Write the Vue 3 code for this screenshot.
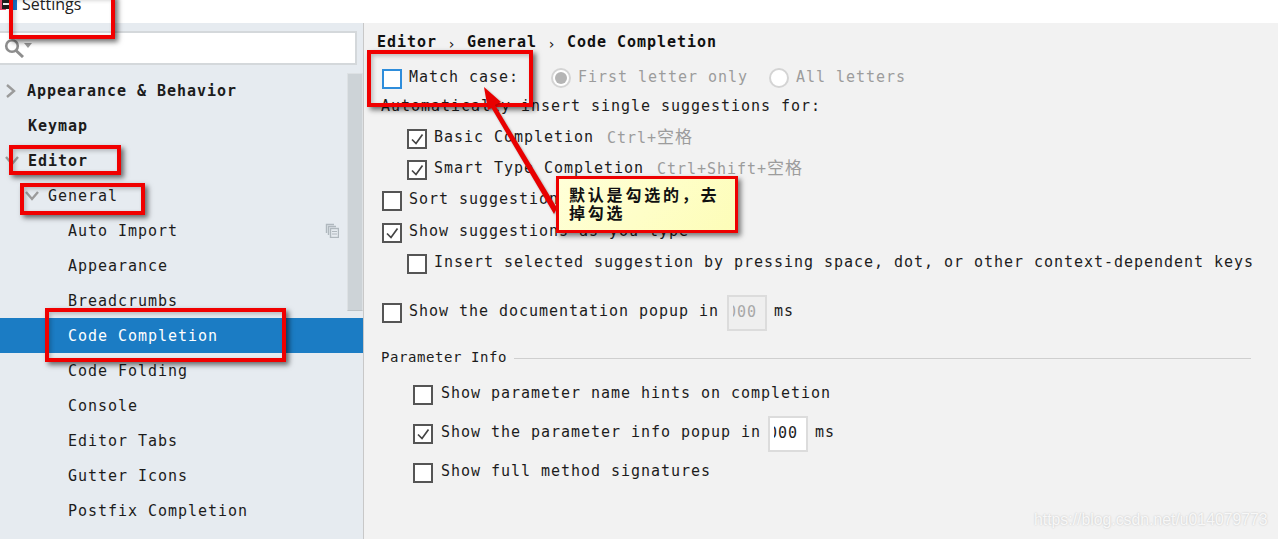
<script setup>
const tree = [
  { label: 'Appearance & Behavior', cls: 'top first-row', arrow: 'right' },
  { label: 'Keymap', cls: 'top plain' },
  { label: 'Editor', cls: 'top', arrow: 'down' },
  { label: 'General', cls: 'group', arrow: 'down' },
  { label: 'Auto Import', cls: 'leaf', copy: true },
  { label: 'Appearance', cls: 'leaf' },
  { label: 'Breadcrumbs', cls: 'leaf' },
  { label: 'Code Completion', cls: 'leaf selected' },
  { label: 'Code Folding', cls: 'leaf' },
  { label: 'Console', cls: 'leaf' },
  { label: 'Editor Tabs', cls: 'leaf' },
  { label: 'Gutter Icons', cls: 'leaf' },
  { label: 'Postfix Completion', cls: 'leaf' }
]
</script>

<template>
  <div class="app">
    <header class="titlebar">
      <svg class="app-icon" width="18" height="14" viewBox="0 0 18 14">
        <rect x="0" y="0" width="6" height="12" fill="#e0486a" />
        <rect x="2" y="0" width="9" height="11" fill="#1c1c1c" />
        <rect x="3" y="5" width="7" height="2" fill="#f0f0f0" />
        <rect x="11" y="0" width="6" height="12" fill="#1877d0" />
      </svg>
      <span class="title">Settings</span>
    </header>

    <div class="body">
      <aside class="sidebar">
        <div class="search">
          <svg width="30" height="20" viewBox="0 0 30 20">
            <circle cx="9" cy="8" r="5.8" fill="none" stroke="#8d8d8d" stroke-width="2.6" />
            <path d="M13 12.5 L20 19" stroke="#8d8d8d" stroke-width="3" fill="none" />
            <path d="M21 5 H29 L25 10 Z" fill="#9a9a9a" />
          </svg>
        </div>
        <ul class="tree">
          <li v-for="item in tree" :key="item.label" class="row" :class="item.cls">
            <svg v-if="item.arrow === 'right'" class="chev" width="12" height="16" viewBox="0 0 12 16">
              <path d="M2 2 L9 8 L2 14" fill="none" stroke="#9b9b9b" stroke-width="2.4" />
            </svg>
            <svg v-if="item.arrow === 'down'" class="chev" width="14" height="12" viewBox="0 0 14 12">
              <path d="M1 2 L7 9 L13 2" fill="none" stroke="#9b9b9b" stroke-width="2.4" />
            </svg>
            <span>{{ item.label }}</span>
            <svg v-if="item.copy" class="copy" width="14" height="15" viewBox="0 0 14 15">
              <path d="M9 1.5 H1.5 V10" fill="none" stroke="#b0b8be" stroke-width="1.4" />
              <path d="M11 3.5 H3.5 V12" fill="none" stroke="#b0b8be" stroke-width="1.4" />
              <rect x="5.5" y="5.5" width="8" height="9" fill="#e6ebf0" stroke="#b0b8be" stroke-width="1.4" />
              <path d="M7 8.5 H12 M7 11 H12" stroke="#b0b8be" stroke-width="1.2" />
            </svg>
          </li>
        </ul>
        <div class="scrollbar"></div>
      </aside>

      <main class="main">
        <nav class="crumbs">
          <span>Editor</span><i class="sep">›</i><span>General</span><i class="sep">›</i><span>Code Completion</span>
        </nav>

        <div class="opt opt-first">
          <b class="cb focus"></b><span class="t">Match case:</span>
          <b class="radio on first"></b><span class="t dim">First letter only</span>
          <b class="radio second"></b><span class="t dim">All letters</span>
        </div>
        <div class="opt tight auto"><span class="t">Automatically insert single suggestions for:</span></div>
        <div class="opt sub">
          <b class="cb"><svg viewBox="0 0 16 16"><path d="M3 8.5 L7 12.5 L13.5 3.5" /></svg></b>
          <span class="t">Basic Completion</span><span class="t dim keys">Ctrl+<em>空格</em></span>
        </div>
        <div class="opt sub">
          <b class="cb"><svg viewBox="0 0 16 16"><path d="M3 8.5 L7 12.5 L13.5 3.5" /></svg></b>
          <span class="t">Smart Type Completion</span><span class="t dim keys">Ctrl+Shift+<em>空格</em></span>
        </div>
        <div class="opt">
          <b class="cb"></b><span class="t">Sort suggestions alphabetically</span>
        </div>
        <div class="opt wide">
          <b class="cb"><svg viewBox="0 0 16 16"><path d="M3 8.5 L7 12.5 L13.5 3.5" /></svg></b>
          <span class="t">Show suggestions as you type</span>
        </div>
        <div class="opt sub">
          <b class="cb"></b><span class="t">Insert selected suggestion by pressing space, dot, or other context-dependent keys</span>
        </div>
        <div class="opt doc">
          <b class="cb"></b><span class="t">Show the documentation popup in</span>
          <span class="num off"><span class="clip">1000</span></span><span class="t">ms</span>
        </div>

        <div class="section"><span>Parameter Info</span><hr /></div>

        <div class="opt param p1">
          <b class="cb"></b><span class="t">Show parameter name hints on completion</span>
        </div>
        <div class="opt param p2">
          <b class="cb"><svg viewBox="0 0 16 16"><path d="M3 8.5 L7 12.5 L13.5 3.5" /></svg></b>
          <span class="t">Show the parameter info popup in</span>
          <span class="num"><span class="clip">1000</span></span><span class="t">ms</span>
        </div>
        <div class="opt param p2">
          <b class="cb"></b><span class="t">Show full method signatures</span>
        </div>
      </main>
    </div>

    <div class="mark m-title"></div>
    <div class="mark m-editor"></div>
    <div class="mark m-general"></div>
    <div class="mark m-code"></div>
    <div class="mark m-match"></div>
    <svg class="arrow" width="1278" height="539" viewBox="0 0 1278 539">
      <polygon points="484,87 501,102 495,105 557,208 554,214 491.5,108 488,110" fill="#e80000" />
    </svg>
    <div class="note">默认是勾选的，去掉勾选</div>
    <div class="watermark">https://blog.csdn.net/u014079773</div>
  </div>
</template>

<style>
html, body { margin: 0; background: #fff; }
</style>

<style scoped>
.app {
  position: relative;
  width: 1278px;
  height: 539px;
  overflow: hidden;
  display: flex;
  flex-direction: column;
  font-family: "DejaVu Sans Mono", "Noto Sans CJK SC", monospace;
  font-size: 15px;
  letter-spacing: 0.97px;
  color: #1c1c1c;
}
.titlebar {
  height: 23px;
  flex: none;
  background: #fff;
  display: flex;
  overflow: hidden;
}
.app-icon { margin-top: -2px; flex: none; }
.title {
  margin: -6px 0 0 4px;
  font-family: "Open Sans", sans-serif;
  font-size: 16px;
  letter-spacing: 0;
  line-height: 20px;
  color: #222;
}
.body { flex: 1; display: flex; min-height: 0; }
.sidebar {
  position: relative;
  width: 363px;
  flex: none;
  background: #e6ebf0;
  border-right: 1px solid #c8c8c8;
  padding-top: 8px;
}
.search {
  width: 352px;
  height: 30px;
  background: #fff;
  border: 2px solid #d4d8db;
  border-left: 0;
  display: flex;
  align-items: center;
  padding-left: 3px;
}
.tree { list-style: none; margin: 8px 0 0; padding: 0; }
.row {
  height: 35px;
  display: flex;
  align-items: center;
  box-sizing: border-box;
  padding-right: 24px;
}
.top { font-weight: 700; padding-left: 5px; }
.top .chev { margin-right: 9px; }
.first-row .chev { margin-right: 10px; }
.top.plain { padding-left: 28px; }
.group { padding-left: 25px; }
.group .chev { margin-right: 9px; }
.leaf { padding-left: 68px; }
.selected { background: #1b7cc4; color: #fff; }
.copy { margin-left: auto; }
.scrollbar {
  position: absolute;
  left: 347px;
  top: 50px;
  width: 14px;
  height: 236px;
  background: #cdd3d7;
  border: 1px solid #dde1e4;
  border-bottom-color: #bcc2c6;
}
.main {
  flex: 1;
  background: #f2f2f2;
  padding: 9px 0 0 13px;
  min-width: 0;
}
.crumbs {
  height: 20px;
  display: flex;
  align-items: center;
  font-weight: 700;
  color: #111;
}
.sep {
  font-style: normal;
  font-weight: 400;
  font-size: 14px;
  width: 30px;
  text-align: center;
  padding-top: 4px;
  box-sizing: border-box;
}
.opt {
  height: 24px;
  display: flex;
  align-items: center;
  margin-left: 5px;
  margin-top: 7px;
  white-space: nowrap;
}
.opt-first { margin-top: 15px; }
.tight { margin-top: 5px; margin-left: 4px; }
.sub { margin-left: 30px; }
.wide { margin-top: 8px; }
.doc { margin-top: 25px; }
.param { margin-left: 36px; }
.param .cb { margin-right: 8px; }
.param .num { margin-left: 7px; }
.p1 { margin-top: 14px; }
.p2 { margin-top: 15px; }
.t { position: relative; top: -2px; line-height: 18px; }
.cb {
  width: 20px;
  height: 20px;
  box-sizing: border-box;
  flex: none;
  background: #fff;
  border: 2px solid #555;
  margin-right: 7px;
  display: block;
}
.cb svg { display: block; width: 16px; height: 16px; fill: none; stroke: #444; stroke-width: 1.7; }
.cb.focus { border-color: #2e8ddb; }
.radio {
  position: relative;
  top: -1px;
  width: 20px;
  height: 20px;
  flex: none;
  box-sizing: border-box;
  border-radius: 50%;
  background: #fff;
  border: 2px solid #d4d4d4;
  margin-right: 7px;
  display: flex;
  align-items: center;
  justify-content: center;
}
.radio.on::after {
  content: "";
  width: 12px;
  height: 12px;
  border-radius: 50%;
  background: #b5b5b5;
}
.first { margin-left: 32px; }
.second { margin-left: 21px; margin-right: 7px; }
.dim { color: #9c9c9c; }
.keys { margin-left: 13px; }
.keys em {
  font-style: normal;
  font-size: 17px;
  line-height: 1;
  letter-spacing: 1px;
  font-family: "Noto Sans CJK SC", sans-serif;
}
.num {
  width: 40px;
  height: 36px;
  box-sizing: border-box;
  border: 2px solid #dcdcdc;
  background: #fff;
  margin: 0 7px 0 8px;
  padding: 0 8px 0 4px;
  display: flex;
  justify-content: flex-end;
  align-items: center;
  overflow: hidden;
  flex: none;
  color: #222;
}
.num.off { background: #efefef; color: #a8a8a8; }
.clip { display: block; position: relative; top: -1px; width: 24px; overflow: hidden; direction: rtl; white-space: nowrap; }
.section {
  height: 24px;
  margin: 20px 27px 0 4px;
  display: flex;
  align-items: center;
  font-size: 14px;
  letter-spacing: 0.57px;
}
.section hr {
  flex: 1;
  height: 1px;
  border: 0;
  background: #cfcfcf;
  margin: 2px 0 0 7px;
}
.mark {
  position: absolute;
  box-sizing: border-box;
  border: 4px solid #f00000;
  box-shadow: 3px 3px 5px rgba(0, 0, 0, 0.55), inset 2px 2px 4px rgba(0, 0, 0, 0.22);
}
.m-title { left: 9px; top: -6px; width: 106px; height: 45px; }
.m-editor { left: 9px; top: 145px; width: 112px; height: 30px; }
.m-general { left: 20px; top: 183px; width: 125px; height: 32px; }
.m-code { left: 45px; top: 308px; width: 241px; height: 54px; }
.m-match { left: 367px; top: 50px; width: 166px; height: 57px; }
.arrow {
  position: absolute;
  left: 0;
  top: 0;
  filter: drop-shadow(1px 1px 1px rgba(0, 0, 0, 0.3));
}
.note {
  position: absolute;
  left: 556px;
  top: 176px;
  width: 182px;
  height: 57px;
  box-sizing: border-box;
  padding: 6px 10px 0;
  background: linear-gradient(135deg, #ffffd8, #fdfdb8);
  border: 3px solid #ee0000;
  box-shadow: 3px 3px 5px rgba(0, 0, 0, 0.5);
  font-family: "Noto Sans CJK SC", sans-serif;
  font-weight: 700;
  font-size: 16px;
  letter-spacing: 2.8px;
  line-height: 18px;
  color: #111;
}
.watermark {
  position: absolute;
  left: 1034px;
  top: 510px;
  font-family: "Liberation Sans", sans-serif;
  font-size: 15.8px;
  letter-spacing: 0;
  line-height: 20px;
  color: rgba(255, 255, 255, 0.85);
  text-shadow: 0 0 2px rgba(0, 0, 0, 0.22);
  white-space: nowrap;
}
</style>
